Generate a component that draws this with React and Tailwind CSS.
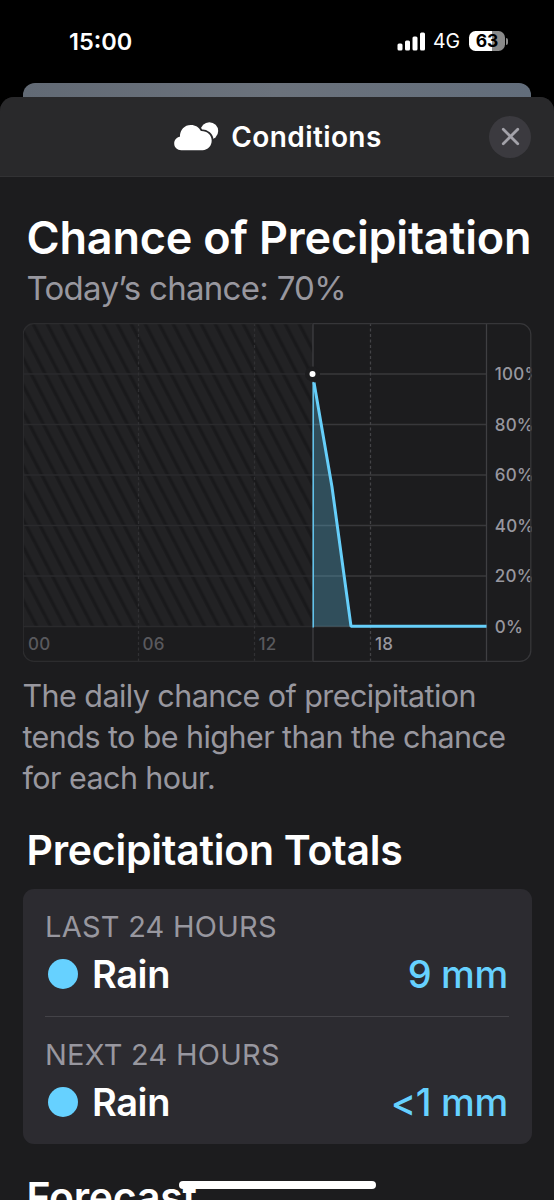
import { X } from "lucide-react";

const yLabels = [
  { label: "100%", y: 374 },
  { label: "80%", y: 424.5 },
  { label: "60%", y: 475 },
  { label: "40%", y: 525.5 },
  { label: "20%", y: 576 },
  { label: "0%", y: 626.5 },
];

const xLabels = [
  { label: "00", x: 28, past: true },
  { label: "06", x: 142.5, past: true },
  { label: "12", x: 258.5, past: true },
  { label: "18", x: 375, past: false },
];

const totals = [
  { period: "Last 24 hours", kind: "Rain", amount: "9 mm" },
  { period: "Next 24 hours", kind: "Rain", amount: "<1 mm" },
];

function StatusBar() {
  return (
    <div className="flex justify-between items-start pt-[27px] pr-[46px] pl-[69px] h-[83px] shrink-0">
      <p className="text-[23.5px] leading-[30px] font-semibold">15:00</p>
      <div className="flex items-center h-[28px]">
        <svg className="w-[29px] h-[19px]" viewBox="0 0 29 19" fill="white">
          <rect x="0.5" y="11.5" width="5" height="7" rx="1.5" />
          <rect x="8" y="8.5" width="5" height="10" rx="1.5" />
          <rect x="15.5" y="4.5" width="5" height="14" rx="1.5" />
          <rect x="23" y="0.5" width="5" height="18" rx="1.5" />
        </svg>
        <p className="ml-[7px] w-[28px] pt-[2px] text-[19.5px] tracking-[-0.2px] whitespace-nowrap">4G</p>
        <div className="flex items-center ml-[8px]">
          <div className="flex justify-center items-center w-[36px] h-[20px] text-[17.5px] font-bold text-black rounded-[6.5px] bg-linear-to-r from-white from-63% to-[#8a8a8a] to-63%">
            63
          </div>
          <div className="ml-[1px] w-[2px] h-[7px] rounded-r-full bg-[#8a8a8a]" />
        </div>
      </div>
    </div>
  );
}

function CloudIcon() {
  return (
    <svg className="w-[45px] h-[29px]" viewBox="0 0 45 29" fill="white">
      <circle cx="35.4" cy="9" r="8.8" />
      <path
        d="M7.3 28.2C3.2 28.2 0.2 25.3 0.2 21.5C0.2 18 2.6 15.5 5.9 14.8C6 7.8 10.4 3 16.8 3C21.5 3 25 5.3 26.9 9.1C33 8.9 37.7 12.8 37.7 18.6C37.7 24 33.9 28.2 28.6 28.2Z"
        stroke="#29292b"
        strokeWidth="3.8"
      />
      <path d="M7.3 28.2C3.2 28.2 0.2 25.3 0.2 21.5C0.2 18 2.6 15.5 5.9 14.8C6 7.8 10.4 3 16.8 3C21.5 3 25 5.3 26.9 9.1C33 8.9 37.7 12.8 37.7 18.6C37.7 24 33.9 28.2 28.6 28.2Z" />
    </svg>
  );
}

function SheetHeader() {
  return (
    <div className="grid grid-cols-[1fr_auto_1fr] items-center px-[23px] h-[80px] border-b bg-[#29292b] border-[#323234] rounded-t-[14px]">
      <span />
      <div className="flex items-center pl-[2px]">
        <CloudIcon />
        <h1 className="ml-[12px] text-[28px] font-semibold tracking-[0.4px] whitespace-nowrap">Conditions</h1>
      </div>
      <button
        aria-label="Close"
        className="flex justify-center items-center justify-self-end w-[42px] h-[42px] rounded-full bg-[#3b3a3f]">
        <X size={29} strokeWidth={2.3} color="#a3a2a9" />
      </button>
    </div>
  );
}

function PrecipitationChart() {
  return (
    <svg
      className="block w-[509px] h-[339px]"
      viewBox="23 323 509 339"
      fontFamily="Inter, sans-serif"
      fontSize="17"
      fontWeight="500">
      <defs>
        <clipPath id="frame">
          <rect x="22.5" y="323" width="509" height="339" rx="11" />
        </clipPath>
        <pattern id="hatch" width="14" height="40" patternUnits="userSpaceOnUse" patternTransform="translate(30.5 323) skewX(27.5)">
          <rect width="14" height="40" fill="#222224" />
          <rect x="0" width="4.6" height="40" fill="#1c1c1e" />
          <rect x="1.3" width="2" height="40" fill="#18181a" />
        </pattern>
      </defs>
      <g clipPath="url(#frame)">
        <rect x="22.5" y="323" width="290.5" height="303.5" fill="url(#hatch)" />
        {yLabels.map(({ label, y }) => (
          <g key={label}>
            <path d={`M23 ${y}H313`} stroke="#2a2a2c" strokeWidth="1.3" />
            <path d={`M313 ${y}H486.5`} stroke="#38383b" strokeWidth="1.3" />
            <text x="494.8" y={y + 6} fill="#98979f" letterSpacing="0.2">
              {label}
            </text>
          </g>
        ))}
        <path d="M138.5 323V661M254.5 323V661" stroke="#303033" strokeWidth="1.3" strokeDasharray="3 2.5" />
        <path d="M370.5 323V661" stroke="#434346" strokeWidth="1.3" strokeDasharray="3 2.5" />
        <path d="M313 323V661M486.5 323V661" stroke="#3f3f42" strokeWidth="1.3" />
        {xLabels.map(({ label, x, past }) => (
          <text key={label} x={x} y="649.5" fill={past ? "#59595d" : "#98979f"} letterSpacing="0.3">
            {label}
          </text>
        ))}
      </g>
      <path d="M34 323.7H313M34 661.3H313M23.2 334V651M34 323.7A10.8 10.8 0 0 0 23.2 334.5M23.2 650.5A10.8 10.8 0 0 0 34 661.3" fill="none" stroke="#2c2c2e" strokeWidth="1.3" />
      <path d="M313 323.7H520A10.8 10.8 0 0 1 530.8 334.5V650.5A10.8 10.8 0 0 1 520 661.3H313" fill="none" stroke="#363639" strokeWidth="1.3" />
      <path d="M313 382L314.5 383L332 487L351 626.5H313Z" fill="#66cffa" fillOpacity="0.28" />
      <path d="M313.2 382V627.5" stroke="#66cffa" strokeWidth="1.4" />
      <path d="M314 382.5L332 487L351 626.2H486.5" fill="none" stroke="#66cffa" strokeWidth="3" strokeLinejoin="bevel" />
      <circle cx="312.5" cy="374" r="7.5" fill="#1c1c1e" />
      <circle cx="312.5" cy="374" r="3" fill="white" />
    </svg>
  );
}

function TotalRow({ period, kind, amount }) {
  return (
    <div className="h-[128px] pt-[21px]">
      <p className="text-[29px] leading-[34px] uppercase text-[#98979f] tracking-[0.25px]">{period}</p>
      <div className="flex items-center mt-[4px] pr-[1px] pl-[3px] h-[52px] text-[38px]">
        <span className="w-[30px] h-[30px] rounded-full bg-[#66d1ff]" />
        <p className="ml-[14px] font-semibold tracking-[-0.4px]">{kind}</p>
        <p className="ml-auto font-medium tracking-[-0.3px] text-[#66d1ff]">{amount}</p>
      </div>
    </div>
  );
}

export default function App() {
  return (
    <div className="relative flex flex-col w-[554px] h-[1200px] overflow-hidden font-['Inter',sans-serif] text-white bg-black">
      <StatusBar />
      <div className="mx-[23px] h-[14px] shrink-0 rounded-t-[12px] bg-linear-to-r from-[#626a75] via-[#6b727c] to-[#626d7b]" />
      <div className="flex-1 rounded-t-[14px] bg-[#1c1c1e]">
        <SheetHeader />
        <main className="px-[22.5px] pt-[33px]">
          <h2 className="pl-[4px] text-[45px] leading-[56px] font-semibold tracking-[-0.2px] whitespace-nowrap">
            Chance of Precipitation
          </h2>
          <p className="pl-[4px] text-[33px] leading-[44px] text-[#98979f] tracking-[-0.7px]">Today’s chance: 70%</p>
          <div className="mt-[13px]">
            <PrecipitationChart />
          </div>
          <p className="mt-[13px] text-[30.5px] leading-[41px] whitespace-nowrap text-[#98979f] tracking-[-0.57px]">
            The daily chance of precipitation
            <br />
            tends to be higher than the chance
            <br />
            for each hour.
          </p>
          <h2 className="mt-[26px] pl-[4px] text-[41px] leading-[52px] font-semibold tracking-[-0.25px] whitespace-nowrap">
            Precipitation Totals
          </h2>
          <section className="mt-[13px] px-[22.5px] h-[255px] rounded-[11px] bg-[#2c2b30] divide-y divide-[#444348]">
            {totals.map((total) => (
              <TotalRow key={total.period} {...total} />
            ))}
          </section>
          <h2 className="mt-[27px] pl-[4px] text-[41px] leading-[52px] font-semibold tracking-[-0.25px]">Forecast</h2>
        </main>
      </div>
      <div className="absolute left-[179px] top-[1181px] w-[197px] h-[8px] rounded-full bg-white" />
    </div>
  );
}
